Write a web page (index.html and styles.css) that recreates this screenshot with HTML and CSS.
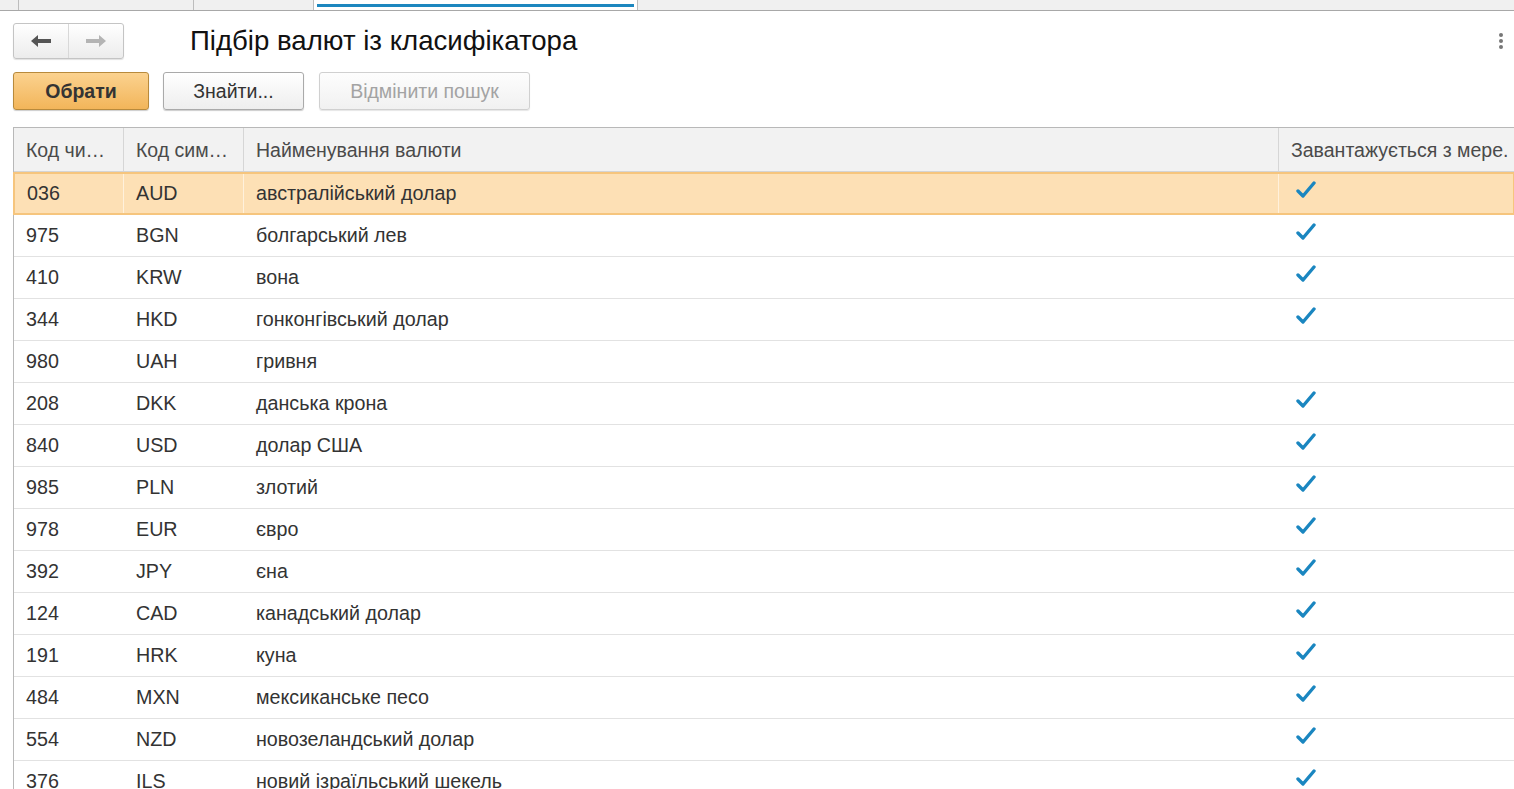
FILE: index.html
```html
<!DOCTYPE html>
<html lang="uk">
<head>
<meta charset="utf-8">
<title>Підбір валют із класифікатора</title>
<link rel="stylesheet" href="styles.css">
</head>
<body>
<div class="tabs">
  <div class="tab tab-a"></div>
  <div class="tab tab-b"></div>
  <div class="tab tab-c"></div>
  <div class="tab tab-active"><span class="tab-bar"></span></div>
  <div class="tab tab-rest"></div>
</div>
<div class="header">
  <div class="nav">
    <button class="nav-btn"><svg width="22" height="14" viewBox="0 0 22 14"><path d="M1 7 L8 1 L8 5 L21 5 L21 9 L8 9 L8 13 Z" fill="#555"/></svg></button>
    <button class="nav-btn"><svg width="22" height="14" viewBox="0 0 22 14"><path d="M21 7 L14 1 L14 5 L1 5 L1 9 L14 9 L14 13 Z" fill="#b4b4b4"/></svg></button>
  </div>
  <h1 class="title">Підбір валют із класифікатора</h1>
  <div class="more"><span></span><span></span><span></span></div>
</div>
<div class="toolbar">
  <button class="btn btn-primary">Обрати</button>
  <button class="btn btn-find">Знайти...</button>
  <button class="btn btn-disabled">Відмінити пошук</button>
</div>
<div class="grid">
  <div class="row head">
    <div class="c c1">Код чи…</div>
    <div class="c c2">Код сим…</div>
    <div class="c c3">Найменування валюти</div>
    <div class="c c4">Завантажується з мере.</div>
  </div>
  <div class="row sel">
    <div class="c c1">036</div><div class="c c2">AUD</div><div class="c c3">австралійський долар</div><div class="c c4"><svg class="chk" viewBox="0 0 20 20"><path d="M2 11 L7 16 L18 3" fill="none" stroke="#1a86c0" stroke-width="3.4" stroke-linecap="round" stroke-linejoin="round"/></svg></div>
  </div>
  <div class="row">
    <div class="c c1">975</div><div class="c c2">BGN</div><div class="c c3">болгарський лев</div><div class="c c4"><svg class="chk" viewBox="0 0 20 20"><path d="M2 11 L7 16 L18 3" fill="none" stroke="#1a86c0" stroke-width="3.4" stroke-linecap="round" stroke-linejoin="round"/></svg></div>
  </div>
  <div class="row">
    <div class="c c1">410</div><div class="c c2">KRW</div><div class="c c3">вона</div><div class="c c4"><svg class="chk" viewBox="0 0 20 20"><path d="M2 11 L7 16 L18 3" fill="none" stroke="#1a86c0" stroke-width="3.4" stroke-linecap="round" stroke-linejoin="round"/></svg></div>
  </div>
  <div class="row">
    <div class="c c1">344</div><div class="c c2">HKD</div><div class="c c3">гонконгівський долар</div><div class="c c4"><svg class="chk" viewBox="0 0 20 20"><path d="M2 11 L7 16 L18 3" fill="none" stroke="#1a86c0" stroke-width="3.4" stroke-linecap="round" stroke-linejoin="round"/></svg></div>
  </div>
  <div class="row">
    <div class="c c1">980</div><div class="c c2">UAH</div><div class="c c3">гривня</div><div class="c c4"></div>
  </div>
  <div class="row">
    <div class="c c1">208</div><div class="c c2">DKK</div><div class="c c3">данська крона</div><div class="c c4"><svg class="chk" viewBox="0 0 20 20"><path d="M2 11 L7 16 L18 3" fill="none" stroke="#1a86c0" stroke-width="3.4" stroke-linecap="round" stroke-linejoin="round"/></svg></div>
  </div>
  <div class="row">
    <div class="c c1">840</div><div class="c c2">USD</div><div class="c c3">долар США</div><div class="c c4"><svg class="chk" viewBox="0 0 20 20"><path d="M2 11 L7 16 L18 3" fill="none" stroke="#1a86c0" stroke-width="3.4" stroke-linecap="round" stroke-linejoin="round"/></svg></div>
  </div>
  <div class="row">
    <div class="c c1">985</div><div class="c c2">PLN</div><div class="c c3">злотий</div><div class="c c4"><svg class="chk" viewBox="0 0 20 20"><path d="M2 11 L7 16 L18 3" fill="none" stroke="#1a86c0" stroke-width="3.4" stroke-linecap="round" stroke-linejoin="round"/></svg></div>
  </div>
  <div class="row">
    <div class="c c1">978</div><div class="c c2">EUR</div><div class="c c3">євро</div><div class="c c4"><svg class="chk" viewBox="0 0 20 20"><path d="M2 11 L7 16 L18 3" fill="none" stroke="#1a86c0" stroke-width="3.4" stroke-linecap="round" stroke-linejoin="round"/></svg></div>
  </div>
  <div class="row">
    <div class="c c1">392</div><div class="c c2">JPY</div><div class="c c3">єна</div><div class="c c4"><svg class="chk" viewBox="0 0 20 20"><path d="M2 11 L7 16 L18 3" fill="none" stroke="#1a86c0" stroke-width="3.4" stroke-linecap="round" stroke-linejoin="round"/></svg></div>
  </div>
  <div class="row">
    <div class="c c1">124</div><div class="c c2">CAD</div><div class="c c3">канадський долар</div><div class="c c4"><svg class="chk" viewBox="0 0 20 20"><path d="M2 11 L7 16 L18 3" fill="none" stroke="#1a86c0" stroke-width="3.4" stroke-linecap="round" stroke-linejoin="round"/></svg></div>
  </div>
  <div class="row">
    <div class="c c1">191</div><div class="c c2">HRK</div><div class="c c3">куна</div><div class="c c4"><svg class="chk" viewBox="0 0 20 20"><path d="M2 11 L7 16 L18 3" fill="none" stroke="#1a86c0" stroke-width="3.4" stroke-linecap="round" stroke-linejoin="round"/></svg></div>
  </div>
  <div class="row">
    <div class="c c1">484</div><div class="c c2">MXN</div><div class="c c3">мексиканське песо</div><div class="c c4"><svg class="chk" viewBox="0 0 20 20"><path d="M2 11 L7 16 L18 3" fill="none" stroke="#1a86c0" stroke-width="3.4" stroke-linecap="round" stroke-linejoin="round"/></svg></div>
  </div>
  <div class="row">
    <div class="c c1">554</div><div class="c c2">NZD</div><div class="c c3">новозеландський долар</div><div class="c c4"><svg class="chk" viewBox="0 0 20 20"><path d="M2 11 L7 16 L18 3" fill="none" stroke="#1a86c0" stroke-width="3.4" stroke-linecap="round" stroke-linejoin="round"/></svg></div>
  </div>
  <div class="row">
    <div class="c c1">376</div><div class="c c2">ILS</div><div class="c c3">новий ізраїльський шекель</div><div class="c c4"><svg class="chk" viewBox="0 0 20 20"><path d="M2 11 L7 16 L18 3" fill="none" stroke="#1a86c0" stroke-width="3.4" stroke-linecap="round" stroke-linejoin="round"/></svg></div>
  </div>
</div>
</body>
</html>
```

FILE: styles.css
```css
html, body {
  margin: 0;
  padding: 0;
  background: #fff;
  overflow: hidden;
  width: 1514px;
  height: 789px;
}
body {
  font-family: "Liberation Sans", Arial, sans-serif;
  color: #333;
}
.tabs {
  display: flex;
  height: 10px;
  background: #f0f0f0;
  border-bottom: 1px solid #a8a8a8;
}
.tab {
  height: 10px;
  border-right: 1px solid #bdbdbd;
}
.tab-a { width: 18px; }
.tab-b { width: 174px; }
.tab-c { width: 119px; }
.tab-active {
  width: 324px;
  background: #fff;
  padding: 4px 3px 0;
  box-sizing: border-box;
}
.tab-bar {
  display: block;
  height: 3px;
  background: #1c87bf;
}
.tab-rest { flex: 1; border-right: none; }

.header {
  display: flex;
  align-items: center;
  padding: 12px 0 0 13px;
  height: 36px;
}
.nav {
  display: flex;
  width: 111px;
  height: 36px;
  box-sizing: border-box;
  border: 1px solid #c4c4c4;
  border-radius: 3px;
  background: linear-gradient(#ffffff, #ececec);
  box-shadow: 0 1px 1px rgba(0,0,0,0.12);
}
.nav-btn {
  flex: 1;
  border: none;
  background: transparent;
  display: flex;
  align-items: center;
  justify-content: center;
  padding: 0;
}
.nav-btn + .nav-btn { border-left: 1px solid #d8d8d8; }
.title {
  margin: 0 0 0 66px;
  font-weight: normal;
  font-size: 27.6px;
  color: #111;
  flex: 1;
  letter-spacing: 0;
}
.more {
  display: flex;
  flex-direction: column;
  gap: 2px;
  margin-right: 11px;
}
.more span {
  width: 4px;
  height: 4px;
  border-radius: 50%;
  background: #777;
}

.toolbar {
  display: flex;
  gap: 14px;
  padding: 13px 0 0 13px;
  height: 38px;
}
.btn {
  height: 38px;
  box-sizing: border-box;
  border-radius: 3px;
  font-family: "Liberation Sans", Arial, sans-serif;
  font-size: 19.5px;
  padding: 0;
}
.btn-primary {
  width: 136px;
  border: 1px solid #b88a3c;
  background: linear-gradient(#fbd28f, #f2b55a);
  color: #333;
  font-weight: bold;
  box-shadow: 0 1px 1px rgba(0,0,0,0.2);
}
.btn-find {
  width: 141px;
  border: 1px solid #aaa;
  background: linear-gradient(#fff, #eeeeee);
  color: #333;
  box-shadow: 0 1px 1px rgba(0,0,0,0.2);
}
.btn-disabled {
  width: 211px;
  margin-left: 1px;
  border: 1px solid #d0d0d0;
  background: linear-gradient(#fdfdfd, #f1f1f1);
  color: #a3a3a3;
  box-shadow: 0 1px 1px rgba(0,0,0,0.1);
}

.grid {
  margin: 17px 0 0 13px;
  width: 1501px;
  border-top: 1px solid #b8b8b8;
  border-left: 1px solid #b8b8b8;
}
.row {
  display: flex;
  height: 42px;
  box-sizing: border-box;
  border-bottom: 1px solid #e2e2e2;
  font-size: 19.7px;
  color: #333;
}
.row.head {
  height: 44px;
  background: #f2f2f2;
  color: #4a4a4a;
  font-size: 19.5px;
  border-bottom: 1px solid #d4d4d4;
}
.row.sel {
  height: 43px;
  background: #fde0b5;
  border: 2px solid #f6c57d;
  margin-left: -1px;
}
.c {
  display: flex;
  align-items: center;
  padding-left: 12px;
  box-sizing: border-box;
  white-space: nowrap;
  overflow: hidden;
}
.c1 { width: 109px; }
.c2 { width: 120px; border-left: 1px solid transparent; }
.c3 { width: 1035px; border-left: 1px solid transparent; }
.c4 { flex: 1; min-width: 0; border-left: 1px solid transparent; padding-left: 12px; }
.head .c2, .head .c3, .head .c4 { border-left-color: #d6d6d6; }
.sel .c2, .sel .c3, .sel .c4 { border-left-color: #fff1dc; }
.sel .c1 { width: 108px; }
.head .c { padding-top: 1px; }
.chk {
  width: 20px;
  height: 20px;
  margin-top: -8px;
  margin-left: 5px;
}
```
